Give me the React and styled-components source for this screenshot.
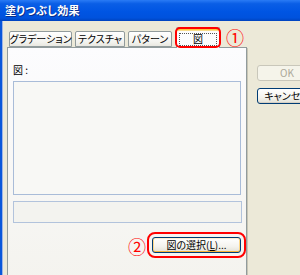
import React from "react";
import styled, { createGlobalStyle } from "styled-components";

const GlobalStyle = createGlobalStyle`
  html, body { margin: 0; padding: 0; background: #ECE9D8; overflow: hidden; }
  * { box-sizing: border-box; }
`;

const JP = `"Noto Sans CJK JP", "Noto Sans", sans-serif`;

const Window = styled.div`
  width: 300px;
  height: 275px;
  overflow: hidden;
  display: flex;
  flex-direction: column;
  background: #ECE9D8;
  font-family: ${JP};
  font-feature-settings: "palt";
`;

const TitleBar = styled.div`
  height: 21px;
  flex: none;
  display: flex;
  align-items: center;
  padding-left: 5px;
  background: linear-gradient(#2A7BF5 0%, #0A5EE6 18%, #0055E3 55%, #0052DD 85%, #0043BE 100%);
`;

const Title = styled.span`
  color: #fff;
  font-size: 11px;
  font-weight: bold;
  line-height: 1;
  letter-spacing: 0.3px;
  text-shadow: 1px 1px 0 #0A2E8A;
`;

const Frame = styled.div`
  flex: 1;
  display: flex;
  align-items: flex-start;
  border-left: 2px solid #0A57DA;
  padding-left: 5px;
  box-shadow: inset 1px 0 0 #9DB4E6;
`;

const Main = styled.div`
  width: 240px;
  flex: none;
  display: flex;
  flex-direction: column;
`;

const TabStrip = styled.div`
  height: 26px;
  display: flex;
  align-items: flex-end;
  padding-left: 2px;
  gap: 3px;
`;

const Tab = styled.div`
  position: relative;
  height: ${(p) => (p.$active ? "21px" : "16px")};
  margin-bottom: ${(p) => (p.$active ? "-1px" : "0")};
  width: ${(p) => p.$w}px;
  margin-left: ${(p) => (p.$active ? "1px" : "0")};
  display: flex;
  align-items: center;
  justify-content: center;
  font-size: 10px;
  line-height: 1;
  color: #000;
  border: 1px solid #919B9C;
  border-bottom: ${(p) => (p.$active ? "none" : "1px solid #919B9C")};
  border-radius: 2px 2px 0 0;
  background: ${(p) =>
    p.$active
      ? "#FCFCFE"
      : "linear-gradient(#FFFFFF, #F3F3EF 70%, #E9E8E1)"};
  box-shadow: ${(p) => (p.$active ? "inset 0 2px 0 #FFC83C, inset 0 3px 0 #F9DC8C" : "none")};
  z-index: ${(p) => (p.$active ? 1 : 0)};
  padding-top: ${(p) => (p.$active ? "1px" : "0")};
  white-space: nowrap;
`;

const FocusBox = styled.span`
  display: flex;
  align-items: center;
  justify-content: center;
  width: 38px;
  height: 13px;
  margin-top: 1px;
  border: 1px dotted #555;
`;

const TabMark = styled.span`
  position: absolute;
  left: -2px;
  right: -2px;
  top: -1px;
  bottom: 0;
  border: 2px solid #F00;
  border-radius: 5px;
  pointer-events: none;
`;

const Marker = styled.span`
  color: #F00;
  font-size: 18px;
  line-height: 1;
  font-family: ${JP};
  font-feature-settings: normal;
`;

const TabMarker = styled(Marker)`
  margin-left: 3px;
  align-self: center;
  margin-top: 6px;
`;

const Panel = styled.div`
  height: 240px;
  border: 1px solid #919B9C;
  background: linear-gradient(#FCFCFE, #F4F3EE);
  box-shadow: 1px 1px 0 #C8C5B5;
  padding: 15px 5px 0 5px;
  display: flex;
  flex-direction: column;
`;

const Label = styled.div`
  font-size: 10px;
  line-height: 14px;
  height: 14px;
  margin-bottom: 4px;
  color: #000;
`;

const Preview = styled.div`
  width: 228px;
  height: 114px;
  border: 1px solid #A9BCD8;
  background: #F8F8F5;
`;

const Field = styled.div`
  width: 229px;
  height: 22px;
  margin-top: 6px;
  border: 1px solid #B2C3DC;
  background: #F3F3EF;
`;

const ButtonRow = styled.div`
  display: flex;
  align-items: center;
  justify-content: flex-end;
  gap: 6px;
  margin-top: 12px;
  padding-right: 0;
`;

const ButtonMarker = styled(Marker)`
  margin-top: 2px;
`;

const PushButton = styled.div`
  width: 89px;
  height: 16px;
  display: flex;
  align-items: center;
  justify-content: center;
  font-size: 10px;
  line-height: 1;
  color: #000;
  border: 1px solid #003C74;
  border-radius: 3px;
  background: linear-gradient(#FFFFFF, #F4F3EE 60%, #E3E1D6);
  box-shadow: inset 0 -1px 0 #F8B33A, inset 1px 0 0 #FDD889, inset -1px 0 0 #FDD889, inset 0 1px 0 #FFF0CF;
  outline: 2px solid #F00;
  outline-offset: 3px;
  margin-right: 0;
`;

const Side = styled.div`
  margin-left: 10px;
  padding-top: 44px;
  display: flex;
  flex-direction: column;
  gap: 7px;
  flex: none;
`;

const DlgButton = styled.div`
  width: 60px;
  height: 16px;
  display: flex;
  align-items: center;
  justify-content: center;
  font-size: 10px;
  line-height: 1;
  border-radius: 3px;
  border: 1px solid ${(p) => (p.$disabled ? "#C9C7BA" : "#003C74")};
  color: ${(p) => (p.$disabled ? "#ACA899" : "#000")};
  background: ${(p) =>
    p.$disabled ? "#F5F4EA" : "linear-gradient(#FFFFFF, #F4F3EE 60%, #E3E1D6)"};
  box-shadow: ${(p) => (p.$disabled ? "none" : "inset 0 -1px 0 #D6D0C5")};
`;

export default function App() {
  return (
    <>
      <GlobalStyle />
      <Window>
        <TitleBar>
          <Title>塗りつぶし効果</Title>
        </TitleBar>
        <Frame>
          <Main>
            <TabStrip>
              <Tab $w={63}>グラデーション</Tab>
              <Tab $w={50}>テクスチャ</Tab>
              <Tab $w={44}>パターン</Tab>
              <Tab $active $w={44}>
                <FocusBox>図</FocusBox>
                <TabMark />
              </Tab>
              <TabMarker>①</TabMarker>
            </TabStrip>
            <Panel>
              <Label>図 :</Label>
              <Preview />
              <Field />
              <ButtonRow>
                <ButtonMarker>②</ButtonMarker>
                <PushButton>
                  図の選択(<u>L</u>)...
                </PushButton>
              </ButtonRow>
            </Panel>
          </Main>
          <Side>
            <DlgButton $disabled>OK</DlgButton>
            <DlgButton>キャンセル</DlgButton>
          </Side>
        </Frame>
      </Window>
    </>
  );
}
